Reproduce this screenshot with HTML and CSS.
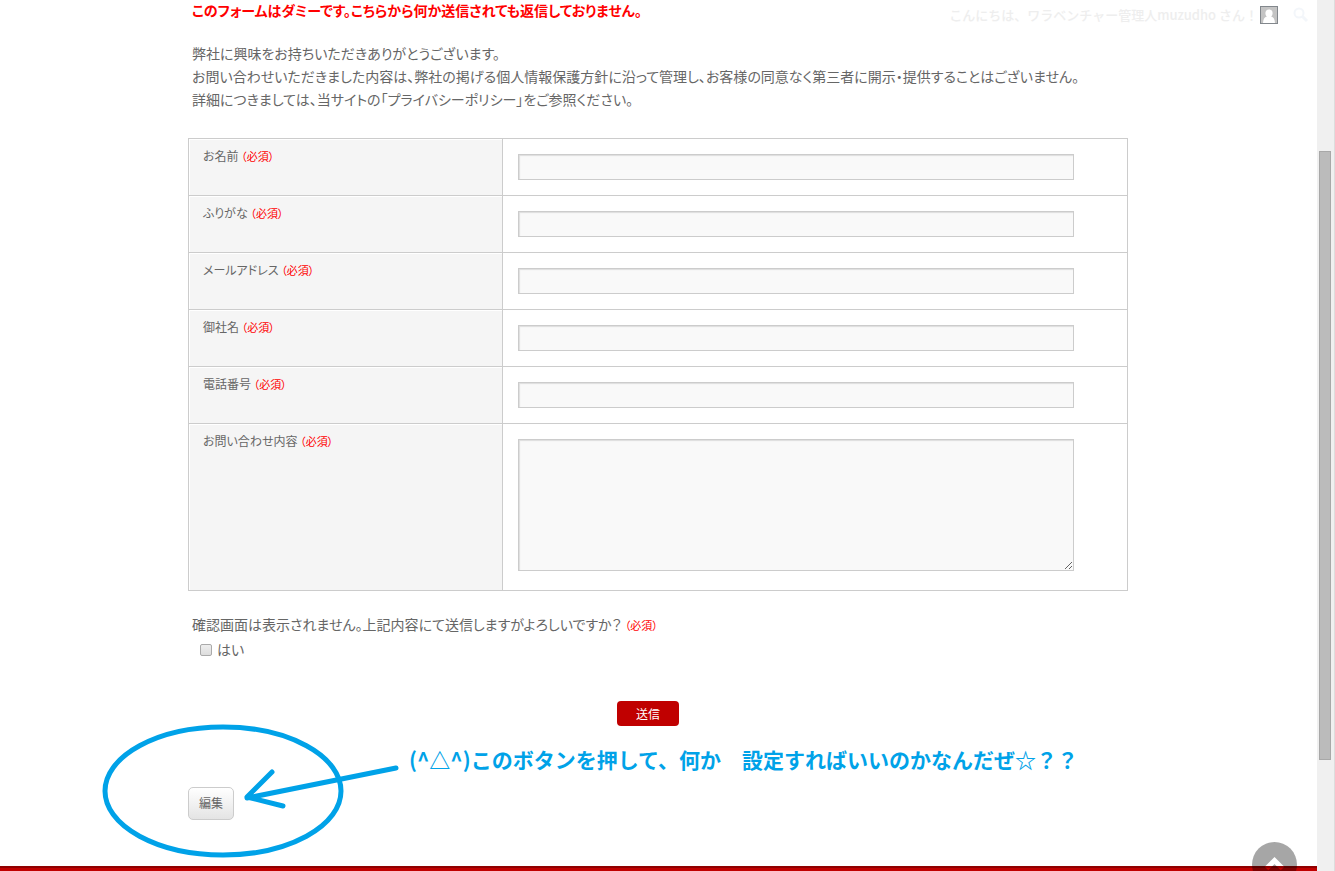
FILE: index.html
```html
<!DOCTYPE html>
<html lang="ja">
<head>
<meta charset="utf-8">
<title>お問い合わせ</title>
<link rel="stylesheet" href="styles.css">
</head>
<body>
<div class="page">
  <div class="account">
    <span>こんにちは、ワラベンチャー管理人muzudho さん！</span>
    <svg class="avatar" viewBox="0 0 18 18" aria-hidden="true"><rect x=".5" y=".5" width="17" height="17" fill="#c4c4c4" stroke="#82878c"/><path d="M9 3.500c2.300 0 3.600 1.600 3.600 3.700 0 1.500-.7 2.600-1.500 3.200 2.600.6 3.600 2.600 3.900 6.600H3c.3-4 1.300-6 3.900-6.600-.8-.6-1.500-1.700-1.500-3.200 0-2.100 1.300-3.700 3.600-3.700z" fill="#fff"/></svg>
    <svg class="search" viewBox="0 0 16 16" aria-hidden="true"><circle cx="6" cy="6" r="4.500"/><path d="M9.500 9.500l4.500 4.500" stroke-width="3"/></svg>
  </div>
  <main class="content">
    <form class="contact">
      <p class="warning">このフォームはダミーです。こちらから何か送信されても返信しておりません。</p>
      <p class="intro">弊社に興味をお持ちいただきありがとうございます。<br>お問い合わせいただきました内容は、弊社の掲げる個人情報保護方針に沿って管理し、お客様の同意なく第三者に開示・提供することはございません。<br>詳細につきましては、当サイトの「プライバシーポリシー」をご参照ください。</p>
      <table class="fields">
        <tr><th scope="row"><label for="name">お名前 <span class="required">（必須）</span></label></th><td><input class="field" id="name" type="text"></td></tr>
        <tr><th scope="row"><label for="kana">ふりがな <span class="required">（必須）</span></label></th><td><input class="field" id="kana" type="text"></td></tr>
        <tr><th scope="row"><label for="mail">メールアドレス <span class="required">（必須）</span></label></th><td><input class="field" id="mail" type="email"></td></tr>
        <tr><th scope="row"><label for="company">御社名 <span class="required">（必須）</span></label></th><td><input class="field" id="company" type="text"></td></tr>
        <tr><th scope="row"><label for="tel">電話番号 <span class="required">（必須）</span></label></th><td><input class="field" id="tel" type="tel"></td></tr>
        <tr><th scope="row"><label for="message">お問い合わせ内容 <span class="required">（必須）</span></label></th><td class="message-cell"><textarea class="field message" id="message"></textarea></td></tr>
      </table>
      <div class="confirm">
        <p>確認画面は表示されません。上記内容にて送信しますがよろしいですか？ <span class="required">（必須）</span></p>
        <label class="agree"><input class="check" type="checkbox">はい</label>
      </div>
      <div class="actions"><button class="submit" type="submit">送信</button></div>
    </form>
    <div class="edit-area">
      <button class="edit" type="button">編集</button>
      <svg class="drawing" viewBox="0 0 300 136" aria-hidden="true"><ellipse cx="122" cy="69" rx="118" ry="64"/><path d="M295 46L146 76M171 50L146 75L182 84"/></svg>
      <p class="note">(^△^)このボタンを押して、何か　設定すればいいのかなんだぜ☆？？</p>
    </div>
  </main>
  <footer class="footer"></footer>
  <a class="to-top" href="#" aria-label="ページの先頭へ"><svg viewBox="0 0 45 45" aria-hidden="true"><mask id="arrow"><rect width="45" height="45" fill="#fff"/><path d="M14.500 26.500l8-8 8 8" fill="none" stroke="#000" stroke-width="5"/></mask><circle cx="22.500" cy="22.500" r="22.500" fill="#000" fill-opacity=".35" mask="url(#arrow)"/></svg></a>
</div>
<div class="scrollbar"><div class="thumb"></div></div>
</body>
</html>
```

FILE: styles.css
```css
* { box-sizing: border-box; }
body {
  margin: 0;
  height: 100vh;
  display: flex;
  overflow: hidden;
  background: #fff;
  color: #666;
  font: 14px/23px "Noto Sans CJK JP", sans-serif;
  font-feature-settings: "palt";
}
p { margin: 0; }
button, input, textarea { font: inherit; color: inherit; }
.page {
  position: relative;
  flex: 1;
  min-width: 0;
  display: flex;
  flex-direction: column;
  overflow: hidden;
}
.account {
  position: absolute;
  top: 3px;
  right: 8px;
  display: flex;
  align-items: center;
  color: #eee;
  font-size: 13px;
  font-weight: 500;
  font-feature-settings: normal;
}
.avatar { width: 18px; height: 18px; margin: 0 15px 0 2px; }
.search { width: 16px; height: 16px; fill: none; stroke: #f3f6fa; stroke-width: 2; }
.content { width: 941px; max-width: 100%; margin: -1px auto 0; padding-right: 1px; flex: 1; }
.warning { padding-left: 4px; color: #f00; font-weight: 700; }
.intro { padding: 20px 0 0 4px; }
.fields {
  width: 100%;
  margin: 27px 0 22px;
  border-collapse: collapse;
  table-layout: fixed;
}
.fields th, .fields td { border: 1px solid #ccc; vertical-align: top; }
.fields th {
  width: 314px;
  padding: 7px 14px;
  background: #f5f5f5;
  box-shadow: inset 1px 1px #fff;
  text-align: left;
  font-size: 12px;
  line-height: 20px;
  font-weight: 400;
}
.fields td { padding: 15px; }
.fields .message-cell { padding-bottom: 19px; }
.required { color: #f00; font-size: 11px; }
.field {
  display: block;
  width: 556px;
  max-width: 100%;
  height: 26px;
  padding: 4px;
  border: 1px solid #ccc;
  border-radius: 0;
  background: #f9f9f9;
  box-shadow: inset 1px 1px 1px #ddd;
}
.message { height: 132px; }
.confirm { padding-left: 4px; }
.agree { display: flex; align-items: center; gap: 5px; padding-left: 8px; line-height: 25px; }
.check {
  appearance: none;
  width: 12px;
  height: 12px;
  margin: 0;
  border: 1px solid #aaa;
  border-radius: 2px;
  background: linear-gradient(#eee, #ddd);
}
.actions { display: flex; justify-content: center; padding: 39px 20px 0 0; }
.submit {
  width: 62px;
  height: 25px;
  padding: 0 0 1px;
  border: 0;
  border-radius: 4px;
  background: #c00000;
  color: #fff;
  font-size: 12px;
}
.edit-area { position: relative; padding-top: 61px; }
.edit {
  display: block;
  width: 46px;
  height: 33px;
  padding: 0 0 2px;
  border: 1px solid #ccc;
  border-radius: 5px;
  background: linear-gradient(#fff, #e4e4e4);
  font-size: 12px;
}
.drawing {
  position: absolute;
  left: -87px;
  top: -4px;
  width: 300px;
  height: 136px;
  fill: none;
  stroke: #00a2e8;
  stroke-width: 5;
  stroke-linecap: round;
  stroke-linejoin: round;
}
.note {
  position: absolute;
  left: 221px;
  top: 19px;
  color: #00a2e8;
  font-size: 21px;
  line-height: 28px;
  font-weight: 700;
  font-feature-settings: normal;
  white-space: nowrap;
}
.to-top {
  position: absolute;
  right: 20px;
  bottom: -16px;
  width: 45px;
  height: 45px;
}
.to-top svg { display: block; }
.footer {
  height: 5px;
  border-top: 2px solid #900000;
  background: #c00000;
}
.scrollbar {
  width: 18px;
  padding: 151px 3px 0 2px;
  background: #f0f0f0;
  border-right: 1px solid #ddd;
}
.thumb { height: 609px; border: 1px solid #a8a8a8; background: #bbb; }
```
